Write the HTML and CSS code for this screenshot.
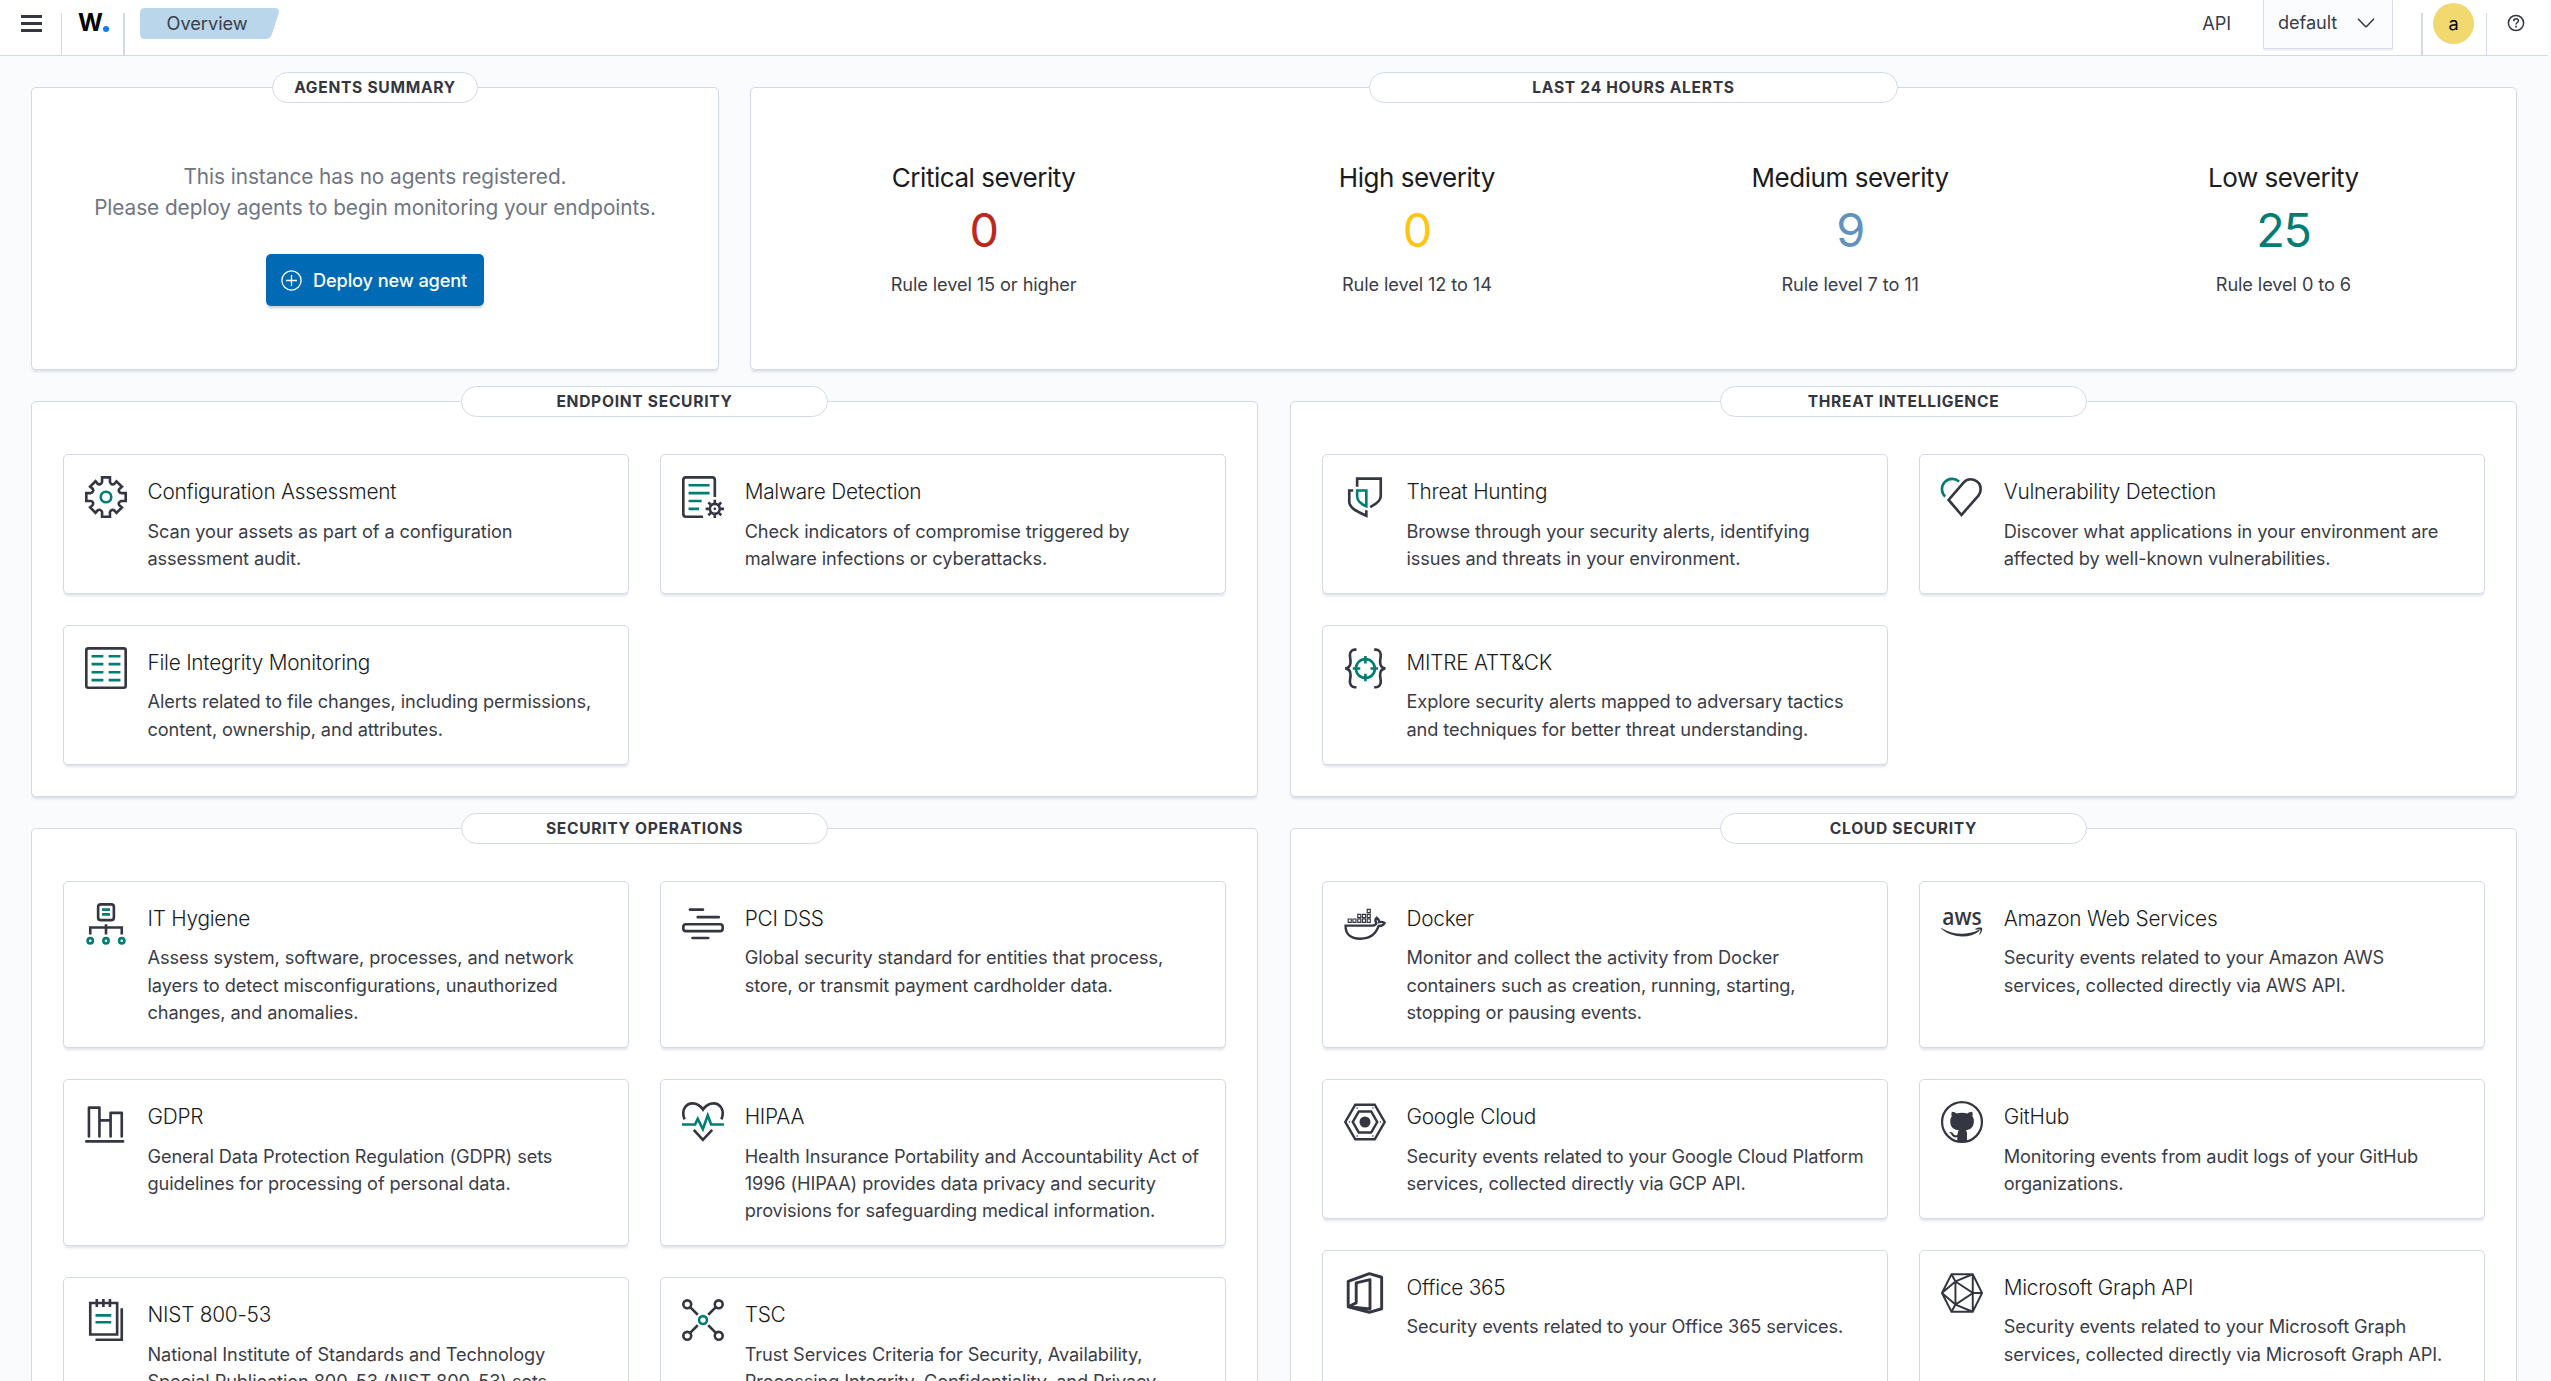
FILE: index.html
```html
<!DOCTYPE html>
<html lang="en">
<head>
<meta charset="utf-8">
<title>Overview</title>
<link rel="stylesheet" href="styles.css">
</head>
<body>
<header class="topbar">
  <button class="menu" aria-label="Menu"><i></i><i></i><i></i></button>
  <span class="rule"></span>
  <div class="logo">W<span class="logo-dot"></span></div>
  <span class="rule rule-wide"></span>
  <div class="crumb">Overview</div>
  <div class="spacer"></div>
  <span class="api-label">API</span>
  <div class="select">default
    <svg width="18" height="10" viewBox="0 0 18 10" fill="none" stroke="#343741" stroke-width="1.5"><path d="M1 .8l7.2 7.4q.8.8 1.6 0L17 .8"/></svg>
  </div>
  <span class="rule rule-wide rule-user"></span>
  <div class="avatar">a</div>
  <span class="rule"></span>
  <svg class="help" width="18" height="18" viewBox="0 0 18 18" fill="none" stroke="#343741" stroke-width="1.5"><circle cx="9" cy="9" r="7.6"/><path d="M6.7 7.2c0-3.2 4.8-3 4.8-.4 0 1.7-2.4 1.7-2.4 3.6"/><path d="M8.2 12.7h1.7" stroke-width="1.7"/></svg>
</header>

<main class="page">
  <div class="row row-top">
    <section class="panel agents">
      <h2 class="pill">Agents summary</h2>
      <p class="agents-text">This instance has no agents registered.<br>Please deploy agents to begin monitoring your endpoints.</p>
      <button class="deploy">
        <svg width="21" height="21" viewBox="0 0 21 21" fill="none" stroke="#fff" stroke-width="1.3"><circle cx="10.5" cy="10.5" r="9.6"/><path d="M10.5 5v11M5 10.5h11"/></svg>
        Deploy new agent
      </button>
    </section>
    <section class="panel alerts">
      <h2 class="pill">Last 24 hours alerts</h2>
      <div class="stats">
        <div class="stat"><h3>Critical severity</h3><b class="num critical">0</b><p>Rule level 15 or higher</p></div>
        <div class="stat"><h3>High severity</h3><b class="num high">0</b><p>Rule level 12 to 14</p></div>
        <div class="stat"><h3>Medium severity</h3><b class="num medium">9</b><p>Rule level 7 to 11</p></div>
        <div class="stat"><h3>Low severity</h3><b class="num low">25</b><p>Rule level 0 to 6</p></div>
      </div>
    </section>
  </div>

  <div class="row">
    <section class="panel">
      <h2 class="pill">Endpoint security</h2>
      <div class="cards">
        <article class="card">
          <svg class="icon" viewBox="0 0 32 32"><path d="M13 1h6v3.6q.3 1.2 1.4 1.7t2.1-.5l1.5-1.7 4.1 4.1-1.7 1.5q-1 .9-.5 2t1.7 1.3H31v6h-3.4q-1.2.3-1.7 1.4t.5 2.1l1.7 1.5-4.1 4.1-1.5-1.7q-1-.9-2-.5T19 27.400V31h-6v-3.600q-.3-1.200-1.400-1.600t-2.100.5L8 28 3.900 23.900l1.700-1.500q.9-1 .5-2.100T4.400 19H1v-6h3.400q1.200-.3 1.700-1.400t-.5-2.100L3.900 8.100 8 4l1.500 1.700q1 1 2.100.6T13 4.600z"/><circle class="teal" cx="16" cy="16" r="4"/></svg>
          <div><h3>Configuration Assessment</h3><p>Scan your assets as part of a configuration<br>assessment audit.</p></div>
        </article>
        <article class="card">
          <svg class="icon" viewBox="0 0 32 32"><path d="M16 31H3a2 2 0 0 1-2-2V3a2 2 0 0 1 2-2h20a2 2 0 0 1 2 2v13"/><path class="teal" d="M5 7h16M5 13h16M5 19h10M5 25h8"/><circle cx="25" cy="25" r="3.800"/><path d="M25 18v2.500M25 29.500V32M18 25h2.500M29.500 25H32M20.100 20.100l1.800 1.800M28.100 28.100l1.800 1.800M29.900 20.100l-1.800 1.800M21.900 28.100l-1.800 1.800"/><circle class="solid" cx="25" cy="25" r="1"/></svg>
          <div><h3>Malware Detection</h3><p>Check indicators of compromise triggered by<br>malware infections or cyberattacks.</p></div>
        </article>
        <article class="card">
          <svg class="icon" viewBox="0 0 32 32"><rect x="1" y="1" width="30" height="30" rx="1.500"/><path class="teal" d="M5 7h9M18 7h9M5 13h9M18 13h9M5 19.200h9M18 19.200h9M5 25.200h9M18 25.200h9"/></svg>
          <div><h3>File Integrity Monitoring</h3><p>Alerts related to file changes, including permissions,<br>content, ownership, and attributes.</p></div>
        </article>
      </div>
    </section>
    <section class="panel">
      <h2 class="pill">Threat intelligence</h2>
      <div class="cards">
        <article class="card">
          <svg class="icon" viewBox="0 0 32 32"><path d="M10 8.200V2h18v13.500c0 3.500-3.500 6-8 8.200M7 11H4v8.500C4 24.500 10 27 17 30.300V26"/><path class="teal" d="M10 11h7v12c-4-1.500-7-4.500-7-7.500z"/></svg>
          <div><h3>Threat Hunting</h3><p>Browse through your security alerts, identifying<br>issues and threats in your environment.</p></div>
        </article>
        <article class="card">
          <svg class="icon" viewBox="0 0 32 32"><path d="M15.600 29.700 5.800 18.200 17 5.200A7.500 7.500 0 0 1 30.200 10.200c0 2-.6 3.400-1.700 4.700z"/><path class="teal" d="M3.200 15.700A7.500 7.500 0 0 1 13.800 4.300"/></svg>
          <div><h3>Vulnerability Detection</h3><p>Discover what applications in your environment are<br>affected by well-known vulnerabilities.</p></div>
        </article>
        <article class="card">
          <svg class="icon" viewBox="0 0 32 32"><path d="M9.500 2H8.300A4 4 0 0 0 4.500 6c0 2.500.8 4.200.4 6.500C4.600 14.800 3.500 16 1 16.300c2.500.3 3.600 1.500 3.900 3.800.4 2.300-.4 3.900-.4 6.400a4 4 0 0 0 3.800 4.200h1.200M23 2h1.200A4 4 0 0 1 28 6c0 2.500-.8 4.200-.4 6.500.3 2.300 1.400 3.500 3.900 3.800-2.500.3-3.600 1.500-3.900 3.800-.4 2.300.4 3.900.4 6.400a4 4 0 0 1-3.800 4.200H23"/><g class="teal"><circle cx="16.300" cy="16.400" r="7.200"/><path d="M16.300 6.800v5.700M16.300 20.300V26M6.700 16.400h5.700M20.200 16.400h5.700"/></g></svg>
          <div><h3>MITRE ATT&amp;CK</h3><p>Explore security alerts mapped to adversary tactics<br>and techniques for better threat understanding.</p></div>
        </article>
      </div>
    </section>
  </div>

  <div class="row">
    <section class="panel">
      <h2 class="pill">Security operations</h2>
      <div class="cards">
        <article class="card">
          <svg class="icon" viewBox="0 0 32 32"><rect x="10" y="1" width="12" height="12" rx="2"/><path d="M16 16.200V24M4 24v-5.300h24V24"/><path class="teal" d="M13 5h6M13 8.700h6"/><g class="teal"><circle cx="4" cy="28.800" r="2"/><circle cx="16" cy="28.800" r="2"/><circle cx="28" cy="28.800" r="2"/></g></svg>
          <div><h3>IT Hygiene</h3><p>Assess system, software, processes, and network<br>layers to detect misconfigurations, unauthorized<br>changes, and anomalies.</p></div>
        </article>
        <article class="card">
          <svg class="icon round" viewBox="0 0 32 32"><path d="M6 5h10M12 10.800h16M8 26.700h12"/><rect x="1" y="16.200" width="30" height="5.200" rx="2"/></svg>
          <div><h3>PCI DSS</h3><p>Global security standard for entities that process,<br>store, or transmit payment cardholder data.</p></div>
        </article>
        <article class="card">
          <svg class="icon round" viewBox="0 0 32 32"><path d="M3 27V5h8v22M11 14.800h8M19.500 27V9H28v18M1 30.800h28"/></svg>
          <div><h3>GDPR</h3><p>General Data Protection Regulation (GDPR) sets<br>guidelines for processing of personal data.</p></div>
        </article>
        <article class="card">
          <svg class="icon" viewBox="0 0 32 32"><path d="M2 14C-1 7 3 1.800 8 1.800c3.500 0 6 1.700 8 4.700 2-3 4.500-4.700 8-4.700 5 0 9 5.200 6 12.200M9 22l6.900 7.600L23 22"/><path class="teal" d="M0 17.900h10l2-4.400 3.900 8 3.700-10.500 2.600 6.900H32"/></svg>
          <div><h3>HIPAA</h3><p>Health Insurance Portability and Accountability Act of<br>1996 (HIPAA) provides data privacy and security<br>provisions for safeguarding medical information.</p></div>
        </article>
        <article class="card">
          <svg class="icon" viewBox="0 0 32 32"><path d="M4 3h20.500v24H4zM9 0v6M14 0v6M19 0v6M28 7v24H8"/><path class="teal" d="M8 12.500h12M8 17.700h12"/></svg>
          <div><h3>NIST 800-53</h3><p>National Institute of Standards and Technology<br>Special Publication 800-53 (NIST 800-53) sets<br>guidelines for federal information systems.</p></div>
        </article>
        <article class="card">
          <svg class="icon" viewBox="0 0 32 32"><circle cx="4" cy="4" r="3"/><circle cx="28" cy="4" r="3"/><circle cx="4" cy="28" r="3"/><circle cx="28" cy="28" r="3"/><path d="m6 6 6 6M26 6l-6 6M6 26l6-6M26 26l-6-6"/><circle class="teal" cx="16" cy="16" r="3"/></svg>
          <div><h3>TSC</h3><p>Trust Services Criteria for Security, Availability,<br>Processing Integrity, Confidentiality, and Privacy</p></div>
        </article>
      </div>
    </section>
    <section class="panel">
      <h2 class="pill">Cloud security</h2>
      <div class="cards">
        <article class="card">
          <svg class="icon" viewBox="0 0 32 32"><path d="M1.200 17.200h20.500c1.700 0 2.700-.7 3-1.900-1-1.300-1-2.800.2-4 1.300.9 1.900 1.900 2 3.300 1.500-.4 2.800-.2 4 .6-.8 1.700-2.200 2.400-4.500 2.300C24.200 24 19.700 27.200 12.500 27.200 5 27.200 1 23.800 1.200 17.200z" stroke-width="1.800"/><path d="M3.200 12.200h2.300v2.500H3.200zM6.800 12.200h2.300v2.500H6.800zM10.500 12.200h2.300v2.500h-2.300zM14.100 12.200h2.300v2.500h-2.300zM17.700 12.200H20v2.500h-2.300zM10.500 8.700h2.300v2.500h-2.300zM14.100 8.700h2.300v2.500h-2.300zM17.700 8.700H20v2.500h-2.300zM17.700 4.800H20v2.500h-2.300z" stroke-width=".9"/></svg>
          <div><h3>Docker</h3><p>Monitor and collect the activity from Docker<br>containers such as creation, running, starting,<br>stopping or pausing events.</p></div>
        </article>
        <article class="card">
          <svg class="icon" viewBox="0 0 32 32"><text class="solid" x="1" y="16.800" font-size="18" textLength="30" lengthAdjust="spacingAndGlyphs">aws</text><path class="solid" d="M.6 19.200c9 5.300 19 5.600 28 1.400.7-.2 1 .4.4.9C22 27.300 8.500 27 .2 19.700c-.3-.4 0-.7.4-.5z"/><path class="solid" d="M26.300 19.700c1.700-1.300 4.500-1.200 5-.6.4.6-.2 3.600-1.700 5-.3.200-.5 0-.4-.3.500-1.200 1.100-2.900.8-3.300-.4-.5-2.300-.3-3.400-.2-.5 0-.6-.3-.3-.6z"/></svg>
          <div><h3>Amazon Web Services</h3><p>Security events related to your Amazon AWS<br>services, collected directly via AWS API.</p></div>
        </article>
        <article class="card">
          <svg class="icon" viewBox="0 0 32 32"><path d="M8.600 2.800h14.800L31 16l-7.600 13.200H8.600L1 16z" stroke-width="1.900"/><path d="M11.300 8h9.400l4.600 8-4.600 8h-9.400l-4.600-8z" stroke-width="1.900"/><circle class="solid" cx="16" cy="16" r="4.200"/><path class="dots" d="M10 5.300h.01M22 5.300h.01M10 26.700h.01M22 26.700h.01M4.200 16h.01M27.800 16h.01"/></svg>
          <div><h3>Google Cloud</h3><p>Security events related to your Google Cloud Platform<br>services, collected directly via GCP API.</p></div>
        </article>
        <article class="card">
          <svg class="icon" viewBox="0 0 32 32"><circle cx="16" cy="16" r="15.200" stroke-width="1.700"/><path class="solid" d="M8.300 8.200c1.500 0 2.700.7 3.500 1.300a17 17 0 0 1 8.400 0c.8-.6 2-1.300 3.500-1.300.6 1.300.5 2.700.2 3.500 1.100 1.400 1.400 3.100 1 5.400-.6 3.200-2.700 4.700-6 5.100.7.8.9 1.700.9 3V31h-7.400v-3.300c-2.700.4-3.700-.6-4.500-2.100-.5-.9-1-1.300-1.800-1.700 1.800-.6 2.700.2 3.400 1.200.7.900 1.500 1.200 3 .8.100-1.500.3-2.600 1.100-3.700-3.800-.4-5.900-2-6.400-5.100-.4-2.300 0-4 1-5.400-.4-.8-.4-2.200.1-3.500z"/></svg>
          <div><h3>GitHub</h3><p>Monitoring events from audit logs of your GitHub<br>organizations.</p></div>
        </article>
        <article class="card">
          <svg class="icon" viewBox="0 0 32 32"><path d="M3.200 26.500V7.200L19.300 1.300 28.700 4v24l-9.400 2.700L3.200 26.500 9.300 23.500V8.300L19.800 5.800V28.200L3.500 26.500" stroke-width="2.200" stroke-linejoin="round"/></svg>
          <div><h3>Office 365</h3><p>Security events related to your Office 365 services.</p></div>
        </article>
        <article class="card">
          <svg class="icon" viewBox="0 0 32 32"><path d="M8 1.700h16.200L31.300 16l-7.100 14.300H8L.7 16zM11 7.200 24.300 16 11 24.800zM8 1.700l3 5.500M24.200 1.700 11 7.200M24.200 1.700v28.600M24.300 16h7M.7 16 11 7.200M.7 16 11 24.800M8 30.300l3-5.500M24.200 30.300 11 24.800" stroke-width="1.500"/></svg>
          <div><h3>Microsoft Graph API</h3><p>Security events related to your Microsoft Graph<br>services, collected directly via Microsoft Graph API.</p></div>
        </article>
      </div>
    </section>
  </div>
</main>
</body>
</html>
```
FILE: styles.css
```css
* { box-sizing: border-box; margin: 0; padding: 0; }

html, body { height: 1381px; overflow: hidden; }

body {
  background: #fafbfd;
  color: #3a3d47;
  font: 400 18.2px/27.3px Inter, "Liberation Sans", sans-serif;
  letter-spacing: -0.1px;
  padding-right: 3px;
}

button { font: inherit; letter-spacing: inherit; border: 0; }

/* Top bar */
.topbar {
  display: flex;
  align-items: flex-start;
  height: 56px;
  padding-left: 21px;
  background: #fff;
  border-bottom: 1px solid #d3dae6;
}
.menu {
  display: flex;
  flex-direction: column;
  gap: 4.600px;
  width: 21px;
  margin: 15px 19px 0 0;
  background: none;
}
.menu i { height: 2.500px; background: #343741; }
.rule { width: 1px; height: 42px; margin-top: 13px; background: #d3dae6; }
.rule-wide { width: 2px; }
.logo {
  display: flex;
  align-items: flex-start;
  width: 61px;
  height: 46px;
  padding: 9px 0 0 16px;
  color: #000;
  font-size: 24px;
  font-weight: 700;
  letter-spacing: 0;
}
.logo-dot { width: 6px; height: 6px; margin-top: 17px; border-radius: 50%; background: #0a7dff; }
.crumb {
  width: 139px;
  height: 31px;
  margin: 8px 0 0 15px;
  padding-left: 26.500px;
  background: #b9d6ea;
  line-height: 31px;
  letter-spacing: -.02px;
  clip-path: path("M5 0H134.500Q140 0 138.700 5L132 26Q130.500 31 125.500 31H5Q0 31 0 26V5Q0 0 5 0Z");
}
.spacer { flex: 1; }
.api-label { margin: 10px 32px 0 0; }
.select {
  display: flex;
  align-items: center;
  justify-content: space-between;
  width: 130px;
  height: 49px;
  padding: 0 17px 3px 14px;
  background: #fbfcfd;
  border: 1px solid #d9dfea;
  border-top: 0;
  box-shadow: 0 2px 2px -1px rgba(152, 162, 179, .3);
}
.rule-user { margin-left: 28px; }
.avatar {
  width: 41px;
  height: 41px;
  margin: 3px 12px 0 10px;
  border-radius: 50%;
  background: #f1d86f;
  color: #000;
  line-height: 41px;
  text-align: center;
}
.help { margin: 14px 23px 0 20px; }

/* Page grid */
.page {
  display: flex;
  flex-direction: column;
  gap: 31.400px;
  padding: 31px 31px 0;
}
.row { display: grid; grid-template-columns: 1227px 1227px; gap: 32px; }
.row-top { grid-template-columns: 688px 1767px; gap: 31px; height: 283px; }

.panel, .card {
  background: #fff;
  border: 1px solid #d3dae6;
  border-radius: 5px;
  box-shadow: 0 2.600px 2.600px -1.300px rgba(152, 162, 179, .3);
}
.panel { display: flex; flex-direction: column; align-items: center; }
.pill {
  width: 30.020%;
  height: 31px;
  margin-top: -16px;
  background: #fff;
  border: 1px solid #d3dae6;
  border-radius: 16px;
  color: #343741;
  font-size: 15.600px;
  font-weight: 700;
  line-height: 29px;
  letter-spacing: .7px;
  text-align: center;
  text-transform: uppercase;
}

/* Agents summary */
.agents-text {
  margin-top: 58px;
  color: #6f7682;
  font-size: 20.800px;
  line-height: 31.200px;
  letter-spacing: -.07px;
  text-align: center;
}
.deploy {
  display: flex;
  align-items: center;
  gap: 11px;
  width: 218px;
  height: 52px;
  margin-top: 31px;
  padding-left: 15px;
  border-radius: 5px;
  background: #006bb4;
  box-shadow: 0 2.600px 2.600px -1.300px rgba(54, 97, 126, .3);
  color: #fff;
  font-weight: 500;
  letter-spacing: -.13px;
}

/* Alert counters */
.stats {
  display: grid;
  grid-template-columns: repeat(4, 1fr);
  align-self: stretch;
  margin: 58px 16px 0;
  text-align: center;
}
.stat h3 { color: #1a1c21; font-size: 26px; font-weight: 400; line-height: 33px; letter-spacing: -.45px; }
.num { display: block; margin: 12.500px 0 17px; font-size: 46.800px; font-weight: 400; line-height: 47px; letter-spacing: -1.400px; }
.critical { color: #bd271e; }
.high { color: #fec514; }
.medium { color: #6092c0; }
.low { color: #017d73; }

/* Module cards */
.cards {
  display: grid;
  grid-template-columns: 566px 566px;
  gap: 31.200px;
  align-self: stretch;
  padding: 37px 31px 31px;
}
.card { display: flex; gap: 20.500px; padding: 21px; }
.card h3 {
  margin-bottom: 10.300px;
  color: #1a1c21;
  font-size: 20.800px;
  font-weight: 300;
  line-height: 31px;
  letter-spacing: -.24px;
}
.card p { margin-bottom: -.3px; white-space: nowrap; }
.icon {
  flex: none;
  width: 42px;
  height: 42px;
  overflow: visible;
  fill: none;
  stroke: #343741;
  stroke-width: 2;
}
.icon .teal { stroke: #017d73; }
.icon .solid { fill: #343741; stroke: none; }
.icon .dots { stroke-width: 1.200; stroke-linecap: round; }
.icon.round { stroke-linecap: round; stroke-linejoin: round; }
.icon text { font-family: "Open Sans", sans-serif; font-weight: 600; letter-spacing: 0; }
```
